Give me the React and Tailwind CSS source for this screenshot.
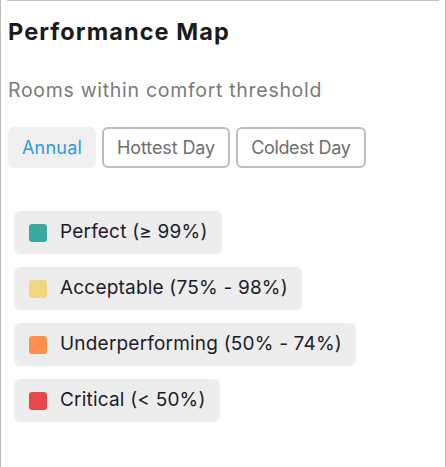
import React from "react";

const items = [
  { color: "bg-[#3ba9a0]", label: "Perfect (≥ 99%)" },
  { color: "bg-[#f0d67e]", label: "Acceptable (75% - 98%)" },
  { color: "bg-[#ff8f4c]", label: "Underperforming (50% - 74%)" },
  { color: "bg-[#e8454c]", label: "Critical (< 50%)" },
];

export default function App() {
  return (
    <div className="w-[446px] h-[467px] bg-white border-x border-[#bdbdbd] overflow-hidden" style={{ fontFamily: "Inter, 'Noto Sans', sans-serif" }}>
      <div className="ml-[6px] mr-[6px] border-t border-[#c4c4c4]" />
      <div className="px-[7px]">
        <h2 className="mt-[16px] text-[23.5px] leading-[30px] font-bold text-[#1b1b1b] tracking-[1.1px]">
          Performance Map
        </h2>
        <p className="mt-[30px] text-[19.5px] leading-[26px] text-[#7a7a7a] tracking-[0.7px]">Rooms within comfort threshold</p>
        <div className="mt-[24px] flex gap-[6px]">
          <button className="h-[41px] px-[14px] rounded-[6px] bg-[#f0f0f0] text-[#2b9be0] text-[18px] tracking-[0.2px]">Annual</button>
          <button className="h-[41px] px-[13px] rounded-[6px] border-2 border-[#bdbdbd] bg-white text-[#6e6e6e] text-[18px] tracking-[-0.1px]">Hottest Day</button>
          <button className="h-[41px] px-[13px] rounded-[6px] border-2 border-[#bdbdbd] bg-white text-[#6e6e6e] text-[18px] tracking-[-0.35px]">Coldest Day</button>
        </div>
        <div className="mt-[43px] ml-[6px] flex flex-col items-start gap-[13px]">
          {items.map((it) => (
            <div key={it.label} className="h-[43px] flex items-center pl-[15px] pr-[14px] rounded-[6px] bg-[#ededed]">
              <span className={`w-[18px] h-[18px] rounded-[3px] ${it.color}`} />
              <span className="ml-[13px] text-[19px] text-[#1c1c28] tracking-[0.2px]">{it.label}</span>
            </div>
          ))}
        </div>
      </div>
    </div>
  );
}
